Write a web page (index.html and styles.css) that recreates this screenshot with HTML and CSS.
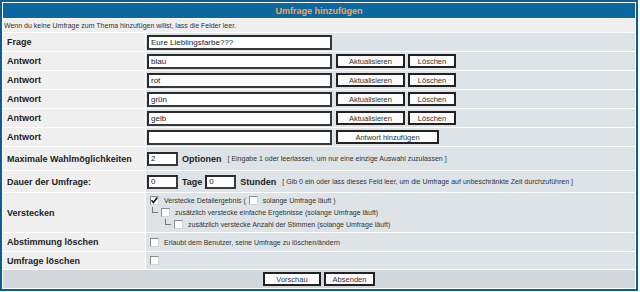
FILE: index.html
```html
<!DOCTYPE html>
<html lang="de">
<head>
  <meta charset="UTF-8" />
  <meta name="viewport" content="width=device-width, initial-scale=1" />
  <title>Umfrage hinzufügen</title>
  <link rel="stylesheet" href="styles.css">
</head>
<body>

<table class="forumline">
  <tr>
    <th colspan="2" class="thHead">Umfrage hinzufügen</th>
  </tr>
  <tr>
    <td colspan="2" class="intro">Wenn du keine Umfrage zum Thema hinzufügen willst, lass die Felder leer.</td>
  </tr>

  <!-- Frage + Antworten -->
  <tr class="h18">
    <td class="label">Frage</td>
    <td class="field"><div class="line"><input class="post wide" type="text" value="Eure Lieblingsfarbe???"></div></td>
  </tr>
  <tr class="h18">
    <td class="label">Antwort</td>
    <td class="field"><div class="line">
      <input class="post wide" type="text" value="blau">
      <button class="btn b-upd">Aktualisieren</button>
      <button class="btn b-del">Löschen</button>
    </div></td>
  </tr>
  <tr class="h18">
    <td class="label">Antwort</td>
    <td class="field"><div class="line">
      <input class="post wide" type="text" value="rot">
      <button class="btn b-upd">Aktualisieren</button>
      <button class="btn b-del">Löschen</button>
    </div></td>
  </tr>
  <tr class="h18">
    <td class="label">Antwort</td>
    <td class="field"><div class="line">
      <input class="post wide" type="text" value="grün">
      <button class="btn b-upd">Aktualisieren</button>
      <button class="btn b-del">Löschen</button>
    </div></td>
  </tr>
  <tr class="h18">
    <td class="label">Antwort</td>
    <td class="field"><div class="line">
      <input class="post wide" type="text" value="gelb">
      <button class="btn b-upd">Aktualisieren</button>
      <button class="btn b-del">Löschen</button>
    </div></td>
  </tr>
  <tr class="h18">
    <td class="label">Antwort</td>
    <td class="field"><div class="line">
      <input class="post wide" type="text" value="">
      <button class="btn b-add">Antwort hinzufügen</button>
    </div></td>
  </tr>

  <!-- Optionen -->
  <tr class="h23">
    <td class="label">Maximale Wahlmöglichkeiten</td>
    <td class="field"><div class="line">
      <input class="post small" type="text" value="2">
      <span class="gen unit">Optionen</span>
      <span class="note">[ Eingabe 1 oder leerlassen, um nur eine einzige Auswahl zuzulassen ]</span>
    </div></td>
  </tr>
  <tr class="h21">
    <td class="label">Dauer der Umfrage:</td>
    <td class="field"><div class="line">
      <input class="post small" type="text" value="0">
      <span class="gen unit tage">Tage</span>
      <input class="post small" type="text" value="0">
      <span class="gen unit">Stunden</span>
      <span class="note">[ Gib 0 ein oder lass dieses Feld leer, um die Umfrage auf unbeschränkte Zeit durchzuführen ]</span>
    </div></td>
  </tr>
  <tr class="h39">
    <td class="label">Verstecken</td>
    <td class="field">
      <div class="opt">
        <span class="cb checked"><svg viewBox="0 0 9 9" width="9" height="9"><path d="M1.5 4.2 L3.4 6.4 L7.4 1.6" fill="none" stroke="#111" stroke-width="1.6"/></svg></span>
        <span class="note">Verstecke Detailergebnis (</span>
        <span class="cb"></span>
        <span class="note">solange Umfrage läuft )</span>
      </div>
      <div class="opt lvl1">
        <span class="tree"></span>
        <span class="cb"></span>
        <span class="note">zusätzlich verstecke einfache Ergebnisse (solange Umfrage läuft)</span>
      </div>
      <div class="opt lvl2">
        <span class="tree"></span>
        <span class="cb"></span>
        <span class="note">zusätzlich verstecke Anzahl der Stimmen (solange Umfrage läuft)</span>
      </div>
    </td>
  </tr>
  <tr class="h18">
    <td class="label">Abstimmung löschen</td>
    <td class="field"><div class="opt">
      <span class="cb"></span>
      <span class="note">Erlaubt dem Benutzer, seine Umfrage zu löschen/ändern</span>
    </div></td>
  </tr>
  <tr class="h17">
    <td class="label">Umfrage löschen</td>
    <td class="field"><div class="opt"><span class="cb"></span></div></td>
  </tr>

  <tr class="h18">
    <td colspan="2" class="catBottom">
      <button class="btn b-prev">Vorschau</button>
      <button class="btn b-send">Absenden</button>
    </td>
  </tr>
</table>

</body>
</html>
```

FILE: styles.css
```css
body {
  margin: 0;
  background: #fff;
  font-family: "Liberation Sans", Arial, Helvetica, sans-serif;
  color: #222;
}

.forumline {
  width: 638px;
  border: 2px solid #0b5e91;
  border-spacing: 1px;
  background: #fff;
}

td, th {
  padding: 0;
}

.thHead {
  height: 15px;
  background: #0a67a0;
  color: #ffa34f;
  font-size: 9px;
  font-weight: bold;
  text-align: center;
}

.intro {
  height: 13px;
  padding-left: 1px;
  background: #efefef;
  font-size: 7px;
  color: #333;
}

.label {
  width: 138px;
  padding-left: 4px;
  background: #efefef;
  font-size: 9px;
  font-weight: bold;
  color: #222;
}

.field {
  padding-left: 1px;
  background: #dee3e7;
}

.catBottom {
  background: #d1d7dc;
  text-align: center;
  font-size: 0;
}

tr.h17 > td { height: 17px; }
tr.h18 > td { height: 18px; }
tr.h21 > td { height: 21px; }
tr.h23 > td { height: 23px; }
tr.h39 > td { height: 39px; }

.line {
  display: flex;
  align-items: center;
}

/* Eingabefelder */
.post {
  box-sizing: border-box;
  height: 15px;
  margin: 0;
  padding: 0 2px;
  border: 2px solid #2a2a2a;
  border-right-color: #3a3a3a;
  border-bottom-color: #3a3a3a;
  background: #fff;
  font-family: inherit;
  font-size: 8px;
  color: #222;
}

.post.wide { width: 185px; }
.post.small { width: 31px; height: 14px; }

/* Buttons */
.btn {
  box-sizing: border-box;
  height: 14px;
  margin: 0;
  padding: 0;
  border: 2px solid #222;
  background: #fbfbfb;
  font-family: inherit;
  font-size: 7.5px;
  color: #333;
}

.b-upd { width: 69px; margin-left: 4px; }
.b-del { width: 48px; margin-left: 3px; }
.b-add { width: 103px; margin-left: 4px; }
.b-prev { width: 58px; }
.b-send { width: 51px; margin-left: 3px; }

.gen {
  font-size: 9px;
  font-weight: bold;
  color: #222;
}

.unit { margin-left: 4px; }
.unit.tage { margin-right: 3px; }

.note {
  margin-left: 6px;
  font-size: 7px;
  color: #333;
}

/* Checkboxen */
.opt {
  display: flex;
  align-items: center;
  height: 12px;
  padding-left: 3px;
}

.opt .note { margin-left: 4px; }
.opt .cb + .note { margin-left: 5px; }
.opt .note + .cb { margin-left: 3px; }

.cb {
  box-sizing: border-box;
  display: inline-block;
  width: 9px;
  height: 9px;
  border: 1px solid #d4d4d4;
  border-top-color: #8c8c8c;
  border-left-color: #8c8c8c;
  background: #fff;
  line-height: 0;
}

.cb.checked svg {
  margin: -1px 0 0 -1px;
}

.tree {
  box-sizing: border-box;
  width: 6px;
  height: 6px;
  margin-right: 3px;
  align-self: flex-start;
  border-left: 1px solid #777;
  border-bottom: 1px solid #777;
}

.lvl1 { padding-left: 5px; }
.lvl2 { padding-left: 18px; }
```
